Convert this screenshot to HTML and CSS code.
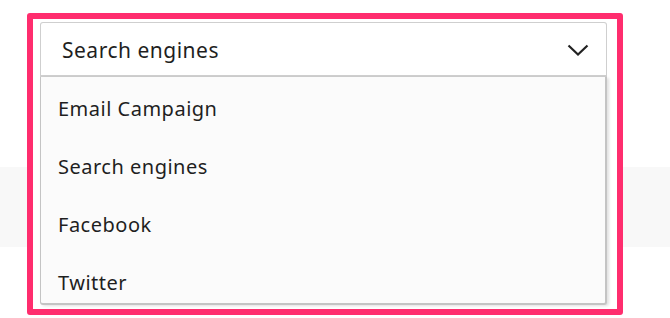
FILE: index.html
```html
<!DOCTYPE html>
<html>
<head>
<meta charset="utf-8">
<link rel="stylesheet" href="styles.css">
</head>
<body>
<div class="page">
  <div class="frame">
    <div class="select">
      <span class="select-value">Search engines</span>
      <svg class="chevron" width="22" height="12" viewBox="0 0 22 12"><path d="M1.5 1.5 L11 10.5 L20.5 1.5" fill="none" stroke="#222" stroke-width="2.2"/></svg>
    </div>
    <ul class="menu">
      <li class="option">Email Campaign</li>
      <li class="option">Search engines</li>
      <li class="option">Facebook</li>
      <li class="option">Twitter</li>
    </ul>
  </div>
</div>
</body>
</html>
```
FILE: styles.css
```css
html, body {
  margin: 0;
  padding: 0;
}
body {
  width: 670px;
  height: 318px;
  overflow: hidden;
  background: linear-gradient(to bottom, #fff 0, #fff 167px, #f8f8f8 167px, #f8f8f8 247px, #fff 247px);
  font-family: "Noto Sans", "Open Sans", sans-serif;
  color: #1f1f1f;
}
.page {
  padding: 13px 0 0 27px;
}
.frame {
  width: 596px;
  height: 302px;
  box-sizing: border-box;
  border: 6px solid #ff2d6e;
  border-radius: 3px;
  background: #fff;
  padding: 3px 10px 0 7px;
}
.select {
  height: 55px;
  box-sizing: border-box;
  border: 1px solid #cfcfcf;
  border-bottom-width: 2px;
  border-radius: 3px 3px 0 0;
  display: flex;
  align-items: center;
  justify-content: space-between;
  padding: 1px 17px 0 21px;
  background: #fff;
}
.select-value {
  font-size: 21px;
  letter-spacing: 0.5px;
}
.chevron {
  display: block;
}
.menu {
  list-style: none;
  margin: 0;
  padding: 2.5px 0 0;
  height: 228px;
  box-sizing: border-box;
  overflow: hidden;
  background: #fbfbfb;
  border: 1px solid #c4c4c4;
  border-top: none;
  border-width: 0 2px 2px 1px;
  border-radius: 0 0 3px 3px;
  box-shadow: 2px 1px 3px rgba(0,0,0,0.12);
}
.option {
  height: 58px;
  display: flex;
  align-items: center;
  padding-left: 17px;
  font-size: 20px;
  letter-spacing: 0.5px;
}
```
